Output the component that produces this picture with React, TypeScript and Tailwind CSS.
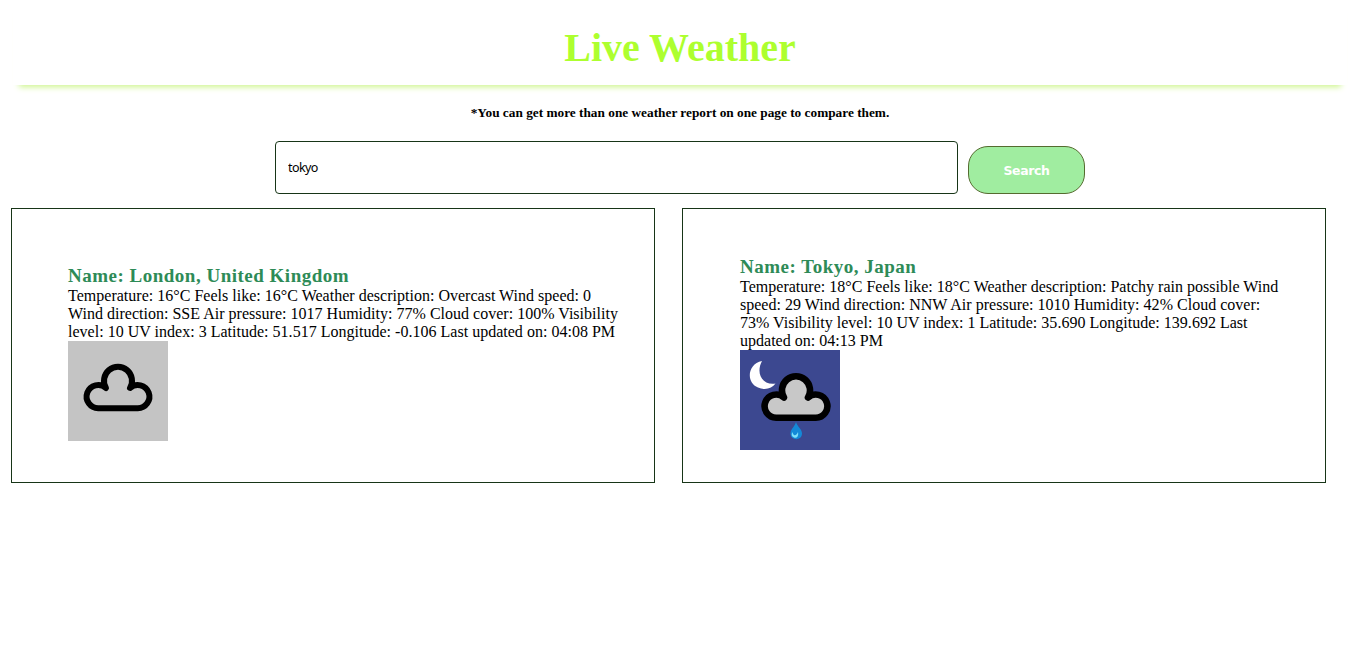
import React, { useState } from "react";

type Report = { name: string; lines: string[]; icon: React.ReactNode };

const CLOUD =
  "M38 47 A14 14 0 1 1 62 47 A11.6 11.6 0 1 1 69.5 67.2 H30.5 A11.6 11.6 0 1 1 38 47 Z";

function Overcast() {
  return (
    <svg className="block size-[100px]" viewBox="0 0 100 100" fill="none">
      <rect width="100" height="100" fill="#c4c4c4" />
      <path d={CLOUD} stroke="#000" strokeWidth="6" strokeLinejoin="round" />
    </svg>
  );
}

function RainyNight() {
  return (
    <svg className="block size-[100px]" viewBox="0 0 100 100" fill="none">
      <rect width="100" height="100" fill="#3c4890" />
      <path d="M22 11 C7 14 6 33 18 37.5 C25 40.5 32 38.5 35.5 33.5 C22 35.5 15.5 23 22 11 Z" fill="#fff" />
      <path d={CLOUD} transform="translate(6 0.5)" fill="#c8c8c8" stroke="#000" strokeWidth="6.6" strokeLinejoin="round" />
      <path d="M56 72 C54.5 77 50.5 79 50.5 83.5 C50.5 91 62 91 62 83.5 C62 79 57.5 77 56 72 Z" fill="#1489d8" />
      <path d="M52.5 82 C53 86 56 86.5 58 82 C59 87 56 88.5 54 87.5 C51.5 86.5 51 84.5 52.5 82 Z" fill="#7fe0fa" />
    </svg>
  );
}

const reports: Report[] = [
  {
    name: "London, United Kingdom",
    lines: [
      "Temperature: 16°C Feels like: 16°C Weather description: Overcast Wind speed: 0",
      "Wind direction: SSE Air pressure: 1017 Humidity: 77% Cloud cover: 100% Visibility",
      "level: 10 UV index: 3 Latitude: 51.517 Longitude: -0.106 Last updated on: 04:08 PM",
    ],
    icon: <Overcast />,
  },
  {
    name: "Tokyo, Japan",
    lines: [
      "Temperature: 18°C Feels like: 18°C Weather description: Patchy rain possible Wind",
      "speed: 29 Wind direction: NNW Air pressure: 1010 Humidity: 42% Cloud cover:",
      "73% Visibility level: 10 UV index: 1 Latitude: 35.690 Longitude: 139.692 Last",
      "updated on: 04:13 PM",
    ],
    icon: <RainyNight />,
  },
];

export default function App() {
  const [city, setCity] = useState("tokyo");
  return (
    <div className="h-[645px] overflow-hidden bg-white px-[11px] font-['Liberation_Serif',serif] text-black">
      <header className="ml-[2px] flex h-[85px] w-[1334px] items-end justify-center pb-[14px] shadow-[0_8px_6px_-6px_#cdf58c]">
        <h1 className="text-[40px] leading-[46px] font-bold text-[#adff2f]">Live Weather</h1>
      </header>
      <p className="mt-[20px] w-[1338px] text-center text-[13.3px] leading-[16px] font-bold">
        *You can get more than one weather report on one page to compare them.
      </p>
      <form className="mt-[20px] ml-[264px] flex items-start" onSubmit={(e) => e.preventDefault()}>
        <input
          aria-label="City"
          className="h-[53px] w-[683px] rounded-[4px] border border-[#173517] px-[12px] font-['Noto_Sans',sans-serif] text-[12.5px] tracking-[-0.6px] outline-none"
          value={city}
          onChange={(e) => setCity(e.target.value)}
        />
        <button className="mt-[5px] ml-[10px] h-[48px] w-[117px] rounded-[20px] border border-[#556b2f] bg-[#a0eda0] pt-[2px] font-['DejaVu_Sans',sans-serif] text-[12.5px] font-bold tracking-[-0.4px] text-white">
          Search
        </button>
      </form>
      <main className="mt-[14px] flex gap-[27px]">
        {reports.map((r) => (
          <section key={r.name} className="flex h-[275px] w-[644px] shrink-0 flex-col justify-center border border-[#173517] pt-[15px] pl-[56px] last:pl-[57px]">
            <h2 className="text-[19px] leading-[22px] font-bold tracking-[0.5px] text-[#2e8b57]">Name: {r.name}</h2>
            {r.lines.map((line) => (
              <p key={line} className="text-[16px] leading-[18px] tracking-[0.015px] whitespace-nowrap">{line}</p>
            ))}
            {r.icon}
          </section>
        ))}
      </main>
    </div>
  );
}
